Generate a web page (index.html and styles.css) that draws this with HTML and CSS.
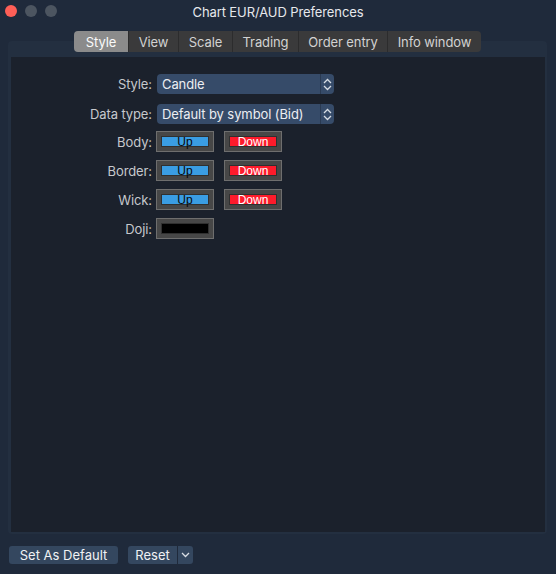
FILE: index.html
```html
<!DOCTYPE html>
<html>
<head>
<meta charset="utf-8">
<link rel="stylesheet" href="styles.css">
</head>
<body>
<div class="window">
  <div class="titlebar">
    <div class="lights">
      <span class="light red"></span>
      <span class="light grey"></span>
      <span class="light grey"></span>
    </div>
    <div class="title">Chart EUR/AUD Preferences</div>
  </div>
  <div class="main">
    <div class="tabs">
      <div class="tab active">Style</div>
      <div class="tab">View</div>
      <div class="tab">Scale</div>
      <div class="tab">Trading</div>
      <div class="tab">Order entry</div>
      <div class="tab">Info window</div>
    </div>
    <div class="group">
      <div class="content">
        <div class="row row-select first">
          <div class="label">Style:</div>
          <div class="select">
            <span class="select-text">Candle</span>
            <span class="select-arrow"><svg width="9" height="13" viewBox="0 0 9 13"><path d="M1 5 L4.5 1.5 L8 5 M1 8 L4.5 11.5 L8 8" fill="none" stroke="#d8dde4" stroke-width="1.3"/></svg></span>
          </div>
        </div>
        <div class="row row-select second">
          <div class="label">Data type:</div>
          <div class="select">
            <span class="select-text">Default by symbol (Bid)</span>
            <span class="select-arrow"><svg width="9" height="13" viewBox="0 0 9 13"><path d="M1 5 L4.5 1.5 L8 5 M1 8 L4.5 11.5 L8 8" fill="none" stroke="#d8dde4" stroke-width="1.3"/></svg></span>
          </div>
        </div>
        <div class="row row-color third">
          <div class="label">Body:</div>
          <div class="swatch"><span class="bar up">Up</span></div>
          <div class="swatch"><span class="bar down">Down</span></div>
        </div>
        <div class="row row-color">
          <div class="label">Border:</div>
          <div class="swatch"><span class="bar up">Up</span></div>
          <div class="swatch"><span class="bar down">Down</span></div>
        </div>
        <div class="row row-color">
          <div class="label">Wick:</div>
          <div class="swatch"><span class="bar up">Up</span></div>
          <div class="swatch"><span class="bar down">Down</span></div>
        </div>
        <div class="row row-color">
          <div class="label">Doji:</div>
          <div class="swatch"><span class="bar black"></span></div>
        </div>
      </div>
    </div>
  </div>
  <div class="footer">
    <div class="btn default-btn">Set As Default</div>
    <div class="btn split">
      <span class="split-main">Reset</span>
      <span class="split-arrow"><svg width="9" height="6" viewBox="0 0 9 6"><path d="M1 1 L4.5 4.5 L8 1" fill="none" stroke="#d8dde4" stroke-width="1.3"/></svg></span>
    </div>
  </div>
</div>
</body>
</html>
```
FILE: styles.css
```css
* { box-sizing: border-box; }
html, body {
  margin: 0;
  padding: 0;
  background: #1f2a3b;
  width: 556px;
  height: 574px;
  overflow: hidden;
  font-family: Inter, "Noto Sans", "Liberation Sans", sans-serif;
  font-size: 13px;
}
.window {
  width: 556px;
  height: 574px;
  background: #1f2a3b;
  display: flex;
  flex-direction: column;
}
.titlebar {
  height: 22px;
  position: relative;
  display: flex;
  align-items: center;
  justify-content: center;
}
.lights {
  position: absolute;
  left: 5px;
  top: 5px;
  display: flex;
  gap: 8px;
}
.light {
  width: 12px;
  height: 12px;
  border-radius: 50%;
  display: block;
}
.light.red { background: #fe5f57; }
.light.grey { background: #4c5560; }
.title {
  color: #e6e8ec;
  font-size: 13px;
  letter-spacing: -0.1px;
  margin-top: 1px;
}
.main {
  padding: 9px 9px 0 8px;
}
.tabs {
  display: flex;
  margin-left: 66px;
  height: 21px;
  position: relative;
  z-index: 1;
  width: 407px;
}
.tab {
  height: 21px;
  display: flex;
  align-items: center;
  justify-content: center;
  background: #3a3a3b;
  color: #d2d2d2;
  border-left: 1px solid #2c2c2d;
  font-size: 13px;
  letter-spacing: -0.1px;
}
.tab:first-child { border-left: none; border-radius: 4px 0 0 4px; }
.tab:last-child { border-radius: 0 4px 4px 0; }
.tab.active { background: #8b8b8b; color: #fafafa; }
.tab:nth-child(1) { width: 54px; }
.tab:nth-child(2) { width: 50px; }
.tab:nth-child(3) { width: 54px; }
.tab:nth-child(4) { width: 66px; }
.tab:nth-child(5) { width: 89px; }
.tab:nth-child(6) { width: 94px; }
.group {
  margin-top: -11px;
  width: 539px;
  height: 493px;
  background: #232f40;
  border-radius: 4px;
  padding: 16px 2px 2px 3px;
}
.content {
  background: #1b212c;
  height: 100%;
  padding-top: 17px;
}
.row {
  display: flex;
  align-items: center;
}
.label {
  width: 141px;
  text-align: right;
  color: #c6c8cc;
  font-size: 13px;
  margin-right: 5px;
  letter-spacing: -0.1px;
}
.row-select { height: 20px; }
.row-select.second { margin-top: 10px; }
.row-color { height: 21px; margin-top: 8px; }
.row-color.third { margin-top: 7px; }
.row-color .label { margin-right: 4px; }
.select {
  width: 177px;
  height: 20px;
  background: #364b69;
  border-radius: 4px;
  display: flex;
  align-items: center;
  color: #eceef2;
  font-size: 13px;
}
.select-text {
  flex: 1;
  padding-left: 5px;
  letter-spacing: -0.1px;
}
.select-arrow {
  width: 14px;
  height: 20px;
  border-left: 1px solid #2a3a52;
  display: flex;
  align-items: center;
  justify-content: center;
}
.swatch {
  width: 58px;
  height: 21px;
  background: #474747;
  border: 1px solid #6e6e6e;
  padding: 4px;
  margin-right: 10px;
  display: flex;
}
.bar {
  flex: 1;
  height: 11px;
  border: 1px solid #303030;
  font-family: "Liberation Sans", Arial, sans-serif;
  font-size: 12px;
  line-height: 1;
  display: flex;
  align-items: center;
  justify-content: center;
  overflow: visible;
}
.bar.up { background: #3a9de3; color: #0a0a0a; }
.bar.down { background: #fe1b2b; color: #ffffff; }
.bar.black { background: #000000; }
.footer {
  margin-top: 12px;
  padding-left: 9px;
  display: flex;
  gap: 10px;
}
.btn {
  height: 18px;
  background: #34475f;
  border-radius: 3px;
  color: #f0f2f4;
  display: flex;
  align-items: center;
  font-size: 13px;
}
.default-btn {
  width: 109px;
  justify-content: center;
}
.split { width: 65px; }
.split-main {
  width: 50px;
  text-align: center;
  border-right: 1px solid #1f2a3b;
  height: 18px;
  line-height: 18px;
}
.split-arrow {
  flex: 1;
  display: flex;
  align-items: center;
  justify-content: center;
}
```
